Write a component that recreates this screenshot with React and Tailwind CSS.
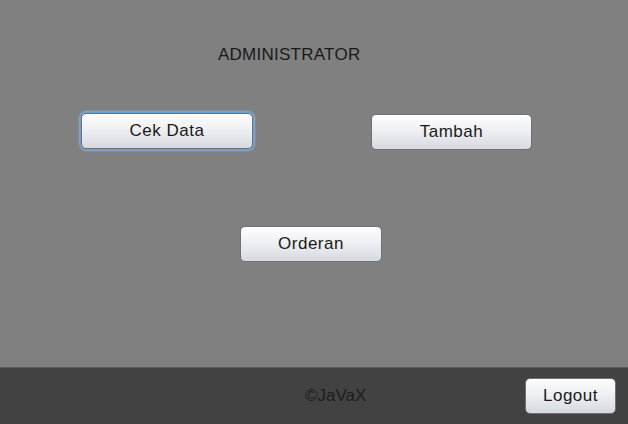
export default function App() {
  const btn =
    "flex items-center justify-center h-[36px] rounded-[5px] border border-[#6f7073] bg-gradient-to-b from-[#fdfdfe] via-[#eceef1] to-[#d6d9df] text-[17px] tracking-[0.5px] text-[#1a1a1a] shadow-[inset_0_1px_0_#ffffff]";
  return (
    <div
      className="w-[628px] h-[424px] flex flex-col bg-[#808080]"
      style={{ fontFamily: '"Liberation Sans", Arial, sans-serif' }}
    >
      <div className="h-[367px] flex flex-col">
        <div className="pt-[45px] pl-[218px] text-[17px] leading-[20px] text-[#1a1a1a] tracking-[0.25px]">
          ADMINISTRATOR
        </div>
        <div className="flex mt-[47px] pl-[80px]">
          <div className="rounded-[7px] p-[1px] bg-[#6a9fd4] shadow-[0_0_2px_1px_#7fb0e0]">
            <div className={btn + " w-[172px] border-[#5c7ea3]"}>Cek Data</div>
          </div>
          <div className={btn + " w-[161px] ml-[117px] mt-[2px]"}>Tambah</div>
        </div>
        <div className="flex mt-[76px] pl-[240px]">
          <div className={btn + " w-[142px]"}>Orderan</div>
        </div>
      </div>
      <div className="flex-1 bg-[#424242] border-t border-[#5a5a5a] flex items-center">
        <div className="ml-[305px] text-[17px] text-[#1e1e1e]">©JaVaX</div>
        <div className={btn + " w-[91px] h-[34px] ml-auto mr-[12px]"}>Logout</div>
      </div>
    </div>
  );
}
